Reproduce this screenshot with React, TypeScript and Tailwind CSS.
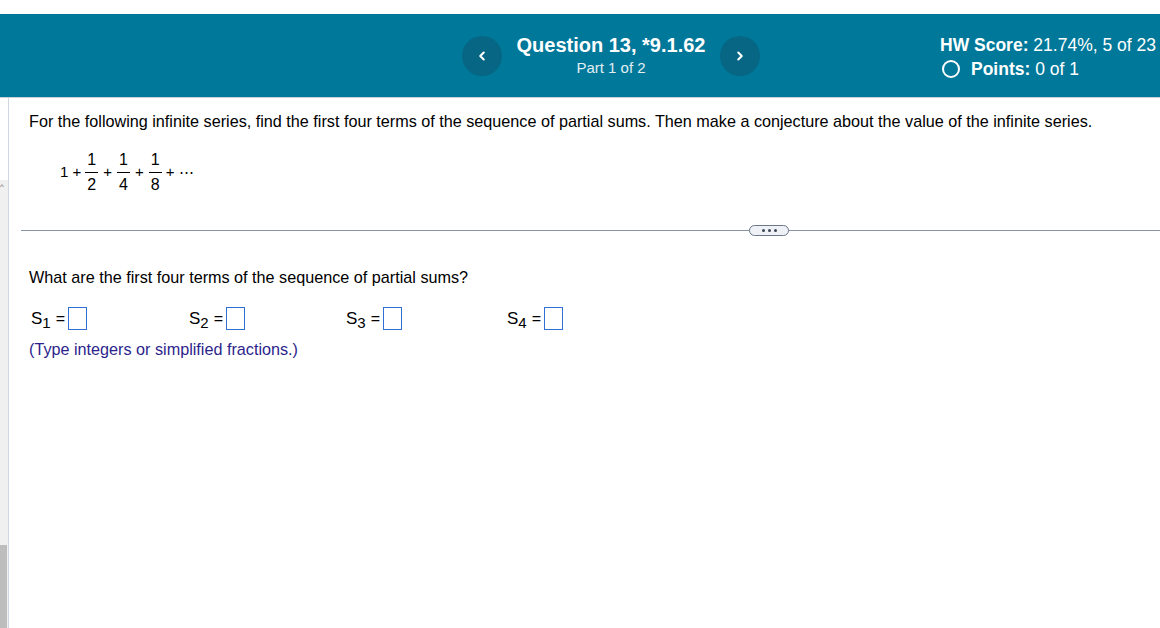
import { ChevronLeft, ChevronRight } from 'lucide-react';

function Fraction({ num, den }: { num: string; den: string }) {
  return (
    <span className="mx-[4px] inline-flex flex-col items-center align-middle text-[16px] leading-none">
      <span className="px-[1px] pb-[4px]">{num}</span>
      <span className="h-px w-[13px] bg-black" />
      <span className="px-[1px] pt-[4px]">{den}</span>
    </span>
  );
}

function AnswerField({ n }: { n: number }) {
  return (
    <span className="inline-flex items-center">
      <span className="text-[17px]">
        S<sub className="relative top-[4px] align-baseline text-[15px]">{n}</sub>
      </span>
      <span className="ml-[5px]">=</span>
      <span className="ml-[3px] inline-block h-[23px] w-[19px] border-[1.5px] border-[#2f6fd6] bg-white" />
    </span>
  );
}

export default function App() {
  return (
    <div className="flex h-[628px] w-[1160px] flex-col overflow-hidden bg-white font-['Liberation_Sans',Arial,sans-serif] text-black">
      <div className="h-[14px] bg-white" />
      <header className="grid h-[84px] grid-cols-[462px_298px_1fr] items-center border-b border-[#c9d0d8] bg-[#00789a] text-white">
        <div />
        <div className="flex items-center justify-between">
          <button className="flex h-10 w-10 items-center justify-center rounded-full bg-[#066683]">
            <ChevronLeft size={14} strokeWidth={3.5} />
          </button>
          <div className="flex flex-col items-center">
            <h1 className="text-[20px] font-bold leading-[22px]">Question 13, *9.1.62</h1>
            <p className="mt-[3px] text-[15px] leading-[18px] text-[#e3eff3]">Part 1 of 2</p>
          </div>
          <button className="flex h-10 w-10 items-center justify-center rounded-full bg-[#066683]">
            <ChevronRight size={14} strokeWidth={3.5} />
          </button>
        </div>
        <div className="pl-[180px] pt-[2px] text-[17.5px] leading-[24px]">
          <p>
            <span className="font-bold">HW Score:</span> 21.74%, 5 of 23
          </p>
          <p className="flex items-center">
            <span className="ml-[2px] mr-[11px] inline-block h-[18px] w-[18px] rounded-full border-2 border-white" />
            <span className="font-bold">Points:</span>&nbsp;0 of 1
          </p>
        </div>
      </header>

      <div className="flex flex-1">
        <aside className="flex w-[9px] flex-col border-r border-[#d0d6e2]">
          <div className="h-[82px] bg-white" />
          <div className="relative h-[365px] bg-[#f0f0f0]">
            <span className="absolute left-0 top-[3px] text-[8px] leading-none text-[#666]">^</span>
          </div>
          <div className="flex-1 bg-[#f0f0f0]">
            <div className="h-full w-[7px] bg-[#bdbdbd]" />
          </div>
        </aside>

        <main className="flex-1 pl-[12px] text-[16.2px]">
          <p className="mt-[13px] pl-[8px] leading-[20px]">
            For the following infinite series, find the first four terms of the sequence of partial sums. Then make a
            conjecture about the value of the infinite series.
          </p>

          <div className="mt-[21px] flex items-center pl-[39px] text-[15px]">
            <span>1 +</span>
            <Fraction num="1" den="2" />
            <span className="mx-[1px]">+</span>
            <Fraction num="1" den="4" />
            <span className="mx-[1px]">+</span>
            <Fraction num="1" den="8" />
            <span>+ ⋯</span>
          </div>

          <div className="relative mt-[37px] h-px bg-[#8792a2]">
            <span className="absolute left-[728px] top-[-5px] flex h-[11px] w-[40px] items-center justify-center gap-[3px] rounded-full border border-[#6b778a] bg-[#eef1f5]">
              <span className="h-[3px] w-[3px] rounded-full bg-[#3c4656]" />
              <span className="h-[3px] w-[3px] rounded-full bg-[#3c4656]" />
              <span className="h-[3px] w-[3px] rounded-full bg-[#3c4656]" />
            </span>
          </div>

          <p className="mt-[36px] pl-[8px] leading-[20px]">What are the first four terms of the sequence of partial sums?</p>

          <div className="mt-[19px] grid grid-cols-[158px_157px_161px_160px] pl-[10px] text-[16px]">
            <AnswerField n={1} />
            <AnswerField n={2} />
            <AnswerField n={3} />
            <AnswerField n={4} />
          </div>

          <p className="mt-[7px] pl-[8px] leading-[20px] text-[#2d1f8c]">(Type integers or simplified fractions.)</p>
        </main>
      </div>
    </div>
  );
}
